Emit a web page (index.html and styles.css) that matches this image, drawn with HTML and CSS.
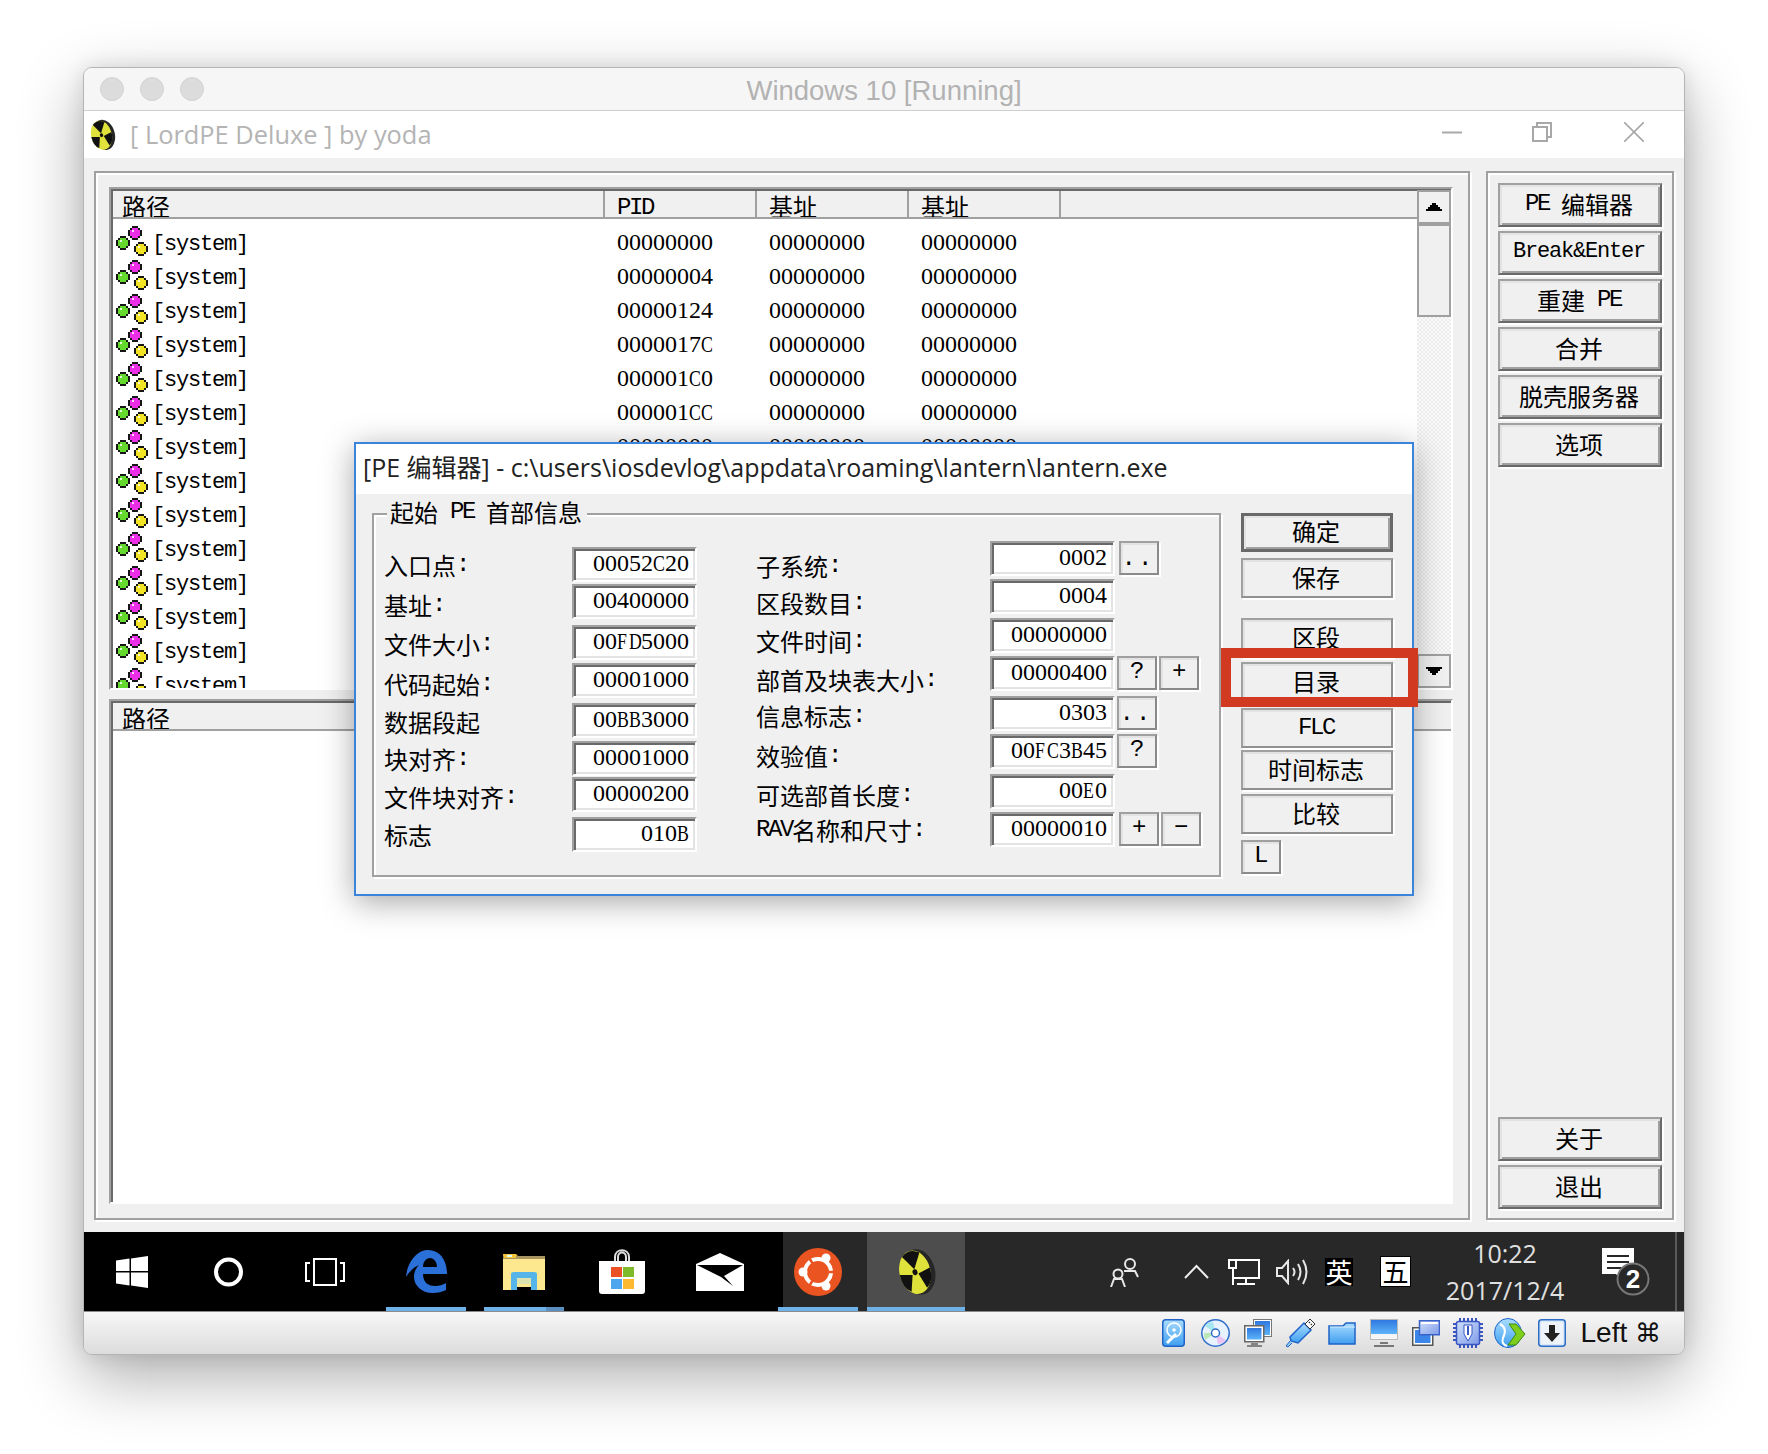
FILE: index.html
```html
<!DOCTYPE html>
<html lang="zh">
<head>
<meta charset="utf-8">
<title>Windows 10 [Running]</title>
<link rel="stylesheet" href="styles.css">
</head>
<body>
<svg class="defs" xmlns="http://www.w3.org/2000/svg">
  <defs>
    <linearGradient id="blue" x1="0" y1="0" x2="0" y2="1"><stop offset="0" stop-color="#2f78e0"/><stop offset="1" stop-color="#5db4f8"/></linearGradient>
    <linearGradient id="sky" x1="0" y1="0" x2="0" y2="1"><stop offset="0" stop-color="#a9dcff"/><stop offset="1" stop-color="#3f9ff0"/></linearGradient>
    <linearGradient id="pale" x1="0" y1="0" x2="1" y2="1"><stop offset="0" stop-color="#cfe0fb"/><stop offset="1" stop-color="#7f9be8"/></linearGradient>
    <symbol id="ball" viewBox="0 0 7 7">
      <path fill="#161616" d="M2 0H5V1H6V2H7V5H6V6H5V7H2V6H1V5H0V2H1V1H2Z"/>
      <path d="M2 1H5V2H6V5H5V6H2V5H1V2H2Z"/>
      <rect x="2" y="2" width="1" height="1" fill="#fff" opacity=".8"/>
    </symbol>
    <symbol id="procs" viewBox="0 0 32 30">
      <g shape-rendering="crispEdges">
        <use href="#ball" x="0" y="10" width="14" height="14" fill="#66d92e"/>
        <use href="#ball" x="12" y="0" width="14" height="14" fill="#ea2fe6"/>
        <use href="#ball" x="18" y="16" width="14" height="14" fill="#f2e424"/>
      </g>
    </symbol>
    <symbol id="hazard" viewBox="0 0 41 48">
      <g transform="rotate(-14 20 24)">
        <ellipse cx="22.500" cy="24.500" rx="16.500" ry="23" fill="#262626"/>
        <ellipse cx="19" cy="24" rx="15.500" ry="22" fill="#dfe23a"/>
        <path fill="#111" d="M19 21L10 6Q19 -1 28 6Z"/>
        <path fill="#111" d="M16 26L3.500 23Q3 37 11 42Z"/>
        <path fill="#111" d="M22 26L34.500 23Q35 37 27 42Z"/>
        <ellipse cx="19" cy="24" rx="2.500" ry="3" fill="#111"/>
      </g>
    </symbol>
  </defs>
</svg>

<div class="window">
  <header class="mac-bar">
    <span class="light"></span><span class="light"></span><span class="light"></span>
    <span class="mac-title">Windows 10 [Running]</span>
  </header>

  <div class="app-bar">
    <svg class="app-icon" width="29" height="32"><use href="#hazard"/></svg>
    <span class="app-title">[ LordPE Deluxe ] by yoda</span>
    <svg class="cap-min" width="20" height="20" viewBox="0 0 20 20"><path d="M0 10.500H20" stroke="#a8a8a8" stroke-width="2"/></svg>
    <svg class="cap-max" width="20" height="20" viewBox="0 0 20 20"><path d="M5 5V1H19V15H15M1 5H15V19H1Z" fill="none" stroke="#a8a8a8" stroke-width="2"/></svg>
    <svg class="cap-close" width="20" height="20" viewBox="0 0 20 20"><path d="M0 0L20 20M20 0L0 20" stroke="#a8a8a8" stroke-width="1.6"/></svg>
  </div>

  <main class="desk">
    <section class="frame frame-left">
      <div class="sunken list-top">
        <div class="sunken-in">
          <div class="list-main">
            <div class="head">
              <div class="hc hc-path"><span class="cj">路径</span></div>
              <div class="hc"><span class="ln hl">PID</span></div>
              <div class="hc"><span class="cj">基址</span></div>
              <div class="hc"><span class="cj">基址</span></div>
            </div>
            <div class="rows">
              <div class="row"><div class="cell-path"><svg width="32" height="30"><use href="#procs"/></svg><span class="lw">[system]</span></div><div class="cell d">00000000</div><div class="cell d">00000000</div><div class="cell d">00000000</div></div>
              <div class="row"><div class="cell-path"><svg width="32" height="30"><use href="#procs"/></svg><span class="lw">[system]</span></div><div class="cell d">00000004</div><div class="cell d">00000000</div><div class="cell d">00000000</div></div>
              <div class="row"><div class="cell-path"><svg width="32" height="30"><use href="#procs"/></svg><span class="lw">[system]</span></div><div class="cell d">00000124</div><div class="cell d">00000000</div><div class="cell d">00000000</div></div>
              <div class="row"><div class="cell-path"><svg width="32" height="30"><use href="#procs"/></svg><span class="lw">[system]</span></div><div class="cell d">0000017<i class="cap">C</i></div><div class="cell d">00000000</div><div class="cell d">00000000</div></div>
              <div class="row"><div class="cell-path"><svg width="32" height="30"><use href="#procs"/></svg><span class="lw">[system]</span></div><div class="cell d">000001<i class="cap">C</i>0</div><div class="cell d">00000000</div><div class="cell d">00000000</div></div>
              <div class="row"><div class="cell-path"><svg width="32" height="30"><use href="#procs"/></svg><span class="lw">[system]</span></div><div class="cell d">000001<i class="cap">C</i><i class="cap">C</i></div><div class="cell d">00000000</div><div class="cell d">00000000</div></div>
              <div class="row"><div class="cell-path"><svg width="32" height="30"><use href="#procs"/></svg><span class="lw">[system]</span></div><div class="cell d">00000000</div><div class="cell d">00000000</div><div class="cell d">00000000</div></div>
              <div class="row"><div class="cell-path"><svg width="32" height="30"><use href="#procs"/></svg><span class="lw">[system]</span></div></div>
              <div class="row"><div class="cell-path"><svg width="32" height="30"><use href="#procs"/></svg><span class="lw">[system]</span></div></div>
              <div class="row"><div class="cell-path"><svg width="32" height="30"><use href="#procs"/></svg><span class="lw">[system]</span></div></div>
              <div class="row"><div class="cell-path"><svg width="32" height="30"><use href="#procs"/></svg><span class="lw">[system]</span></div></div>
              <div class="row"><div class="cell-path"><svg width="32" height="30"><use href="#procs"/></svg><span class="lw">[system]</span></div></div>
              <div class="row"><div class="cell-path"><svg width="32" height="30"><use href="#procs"/></svg><span class="lw">[system]</span></div></div>
              <div class="row"><div class="cell-path"><svg width="32" height="30"><use href="#procs"/></svg><span class="lw">[system]</span></div></div>
            </div>
          </div>
          <div class="scroll">
            <div class="sb-btn sb-up"><svg width="16" height="8" viewBox="0 0 16 8" shape-rendering="crispEdges"><path d="M6 0H10V2H12V4H14V6H16V8H0V6H2V4H4V2H6Z" fill="#000"/></svg></div>
            <div class="sb-thumb"></div>
            <div class="sb-track"></div>
            <div class="sb-btn sb-down"><svg width="16" height="8" viewBox="0 0 16 8" shape-rendering="crispEdges"><path d="M0 0H16V2H14V4H12V6H10V8H6V6H4V4H2V2H0Z" fill="#000"/></svg></div>
          </div>
        </div>
      </div>
      <div class="sunken list-bottom">
        <div class="sunken-in sunken-col">
          <div class="head">
            <div class="hc hc-path"><span class="cj">路径</span></div>
          </div>
          <div class="blank"></div>
        </div>
      </div>
    </section>

    <aside class="frame frame-right">
      <div class="btn side"><span class="ln">PE </span><span class="cj">编辑器</span></div>
      <div class="btn side"><span class="lw">Break&amp;Enter</span></div>
      <div class="btn side"><span class="cj">重建</span><span class="ln"> PE</span></div>
      <div class="btn side"><span class="cj">合并</span></div>
      <div class="btn side"><span class="cj">脱壳服务器</span></div>
      <div class="btn side"><span class="cj">选项</span></div>
      <div class="side-gap"></div>
      <div class="btn side"><span class="cj">关于</span></div>
      <div class="btn side"><span class="cj">退出</span></div>
    </aside>
  </main>

  <footer class="taskbar">
    <div class="tb tb-sys">
      <svg width="32" height="32" viewBox="0 0 32 32"><path fill="#fff" d="M0 4.500L13.500 2.600V15H0ZM15 2.400L32 0V15H15ZM0 16.500H13.500V29.400L0 27.500ZM15 16.500H32V32L15 29.600Z"/></svg>
    </div>
    <div class="tb tb-sys">
      <svg width="31" height="30" viewBox="0 0 31 30"><circle cx="15.500" cy="15" r="12.500" fill="none" stroke="#fff" stroke-width="4"/></svg>
    </div>
    <div class="tb tb-sys">
      <svg width="40" height="28" viewBox="0 0 40 28"><path fill="none" stroke="#fff" stroke-width="2" d="M9 1H31V27H9ZM5 5H1V23H5M35 5H39V23H35"/></svg>
    </div>
    <div class="tb tb-app tb-edge on">
      <svg width="41" height="43" viewBox="0 0 41 43"><path fill="#2a70d8" fill-rule="evenodd" d="M22 0C33 0 41 9 41 24H17C17 33 23 36 29 36C33 36 37 35 40 33V40C36 42 32 43 27 43C15 43 8 35 8 27C8 22 10 18 13 15C8 17 3 22 0 27C1 14 10 0 22 0ZM17 17H31C31 12 28 8 24 8C20 8 17 12 17 17Z"/></svg>
    </div>
    <div class="tb tb-app on on-multi">
      <svg width="42" height="36" viewBox="0 0 42 36"><path fill="#e9b93f" d="M0 0H13L16 3H0Z"/><rect y="2" width="42" height="34" fill="#fde88f"/><rect y="2" width="42" height="3" fill="#a89560"/><rect x="1" y="0" width="12" height="4" fill="#f3c33c"/><rect x="4" y="1" width="5" height="2" fill="#dff"/><path fill="#000" d="M8 33H34V36H8Z"/><path fill="#55b5e8" d="M8 20Q8 18 11 18H31Q34 18 34 20V36H28V24H14V36H8Z"/><rect x="14" y="24" width="14" height="6" fill="#dde4b0"/></svg>
    </div>
    <div class="tb tb-app">
      <svg width="46" height="45" viewBox="0 0 46 45"><path fill="none" stroke="#ddd" stroke-width="2" d="M16 13V8C16 -1 30 -1 30 8V13M19 13V8C19 2 27 2 27 8V13"/><path fill="#fff" d="M0 12H46V42Q46 45 43 45H3Q0 45 0 42Z"/><rect x="12" y="18" width="11" height="10" fill="#ea5125"/><rect x="24" y="18" width="11" height="10" fill="#7fba2a"/><rect x="12" y="30" width="11" height="10" fill="#4ea6ee"/><rect x="24" y="30" width="11" height="10" fill="#ffb931"/></svg>
    </div>
    <div class="tb tb-app">
      <svg width="48" height="38" viewBox="0 0 48 38"><path fill="#fff" d="M24 0L48 11V38H0V11Z"/><path fill="#000" d="M1 12H47L28 23L37 33L25 24Z"/></svg>
    </div>
    <div class="tb tb-app tb-ubuntu on">
      <svg width="48" height="48" viewBox="0 0 48 48"><circle cx="24" cy="24" r="24" fill="#e95420"/><circle cx="24" cy="24" r="13" fill="none" stroke="#fff" stroke-width="4"/><path stroke="#e95420" stroke-width="2.500" d="M24 24L42 24M24 24L12 5M24 24L12 43"/><circle cx="9" cy="24" r="4.500" fill="#fff"/><circle cx="32" cy="10" r="4.500" fill="#fff"/><circle cx="32" cy="38" r="4.500" fill="#fff"/></svg>
    </div>
    <div class="tb tb-app tb-active on">
      <svg width="41" height="48"><use href="#hazard"/></svg>
    </div>

    <div class="tray">
      <svg class="t-people" width="30" height="30" viewBox="0 0 30 30"><g fill="none" stroke="#e8e8e8" stroke-width="2"><circle cx="21" cy="7" r="5"/><circle cx="9" cy="17" r="4.500"/><path d="M2 30L5 22H13L16 30M15 14H26L29 20"/></g></svg>
      <svg class="t-chev" width="25" height="15" viewBox="0 0 25 15"><path d="M1 14L12.500 2L24 14" fill="none" stroke="#eee" stroke-width="2"/></svg>
      <svg class="t-net" width="32" height="26" viewBox="0 0 32 26"><g fill="none" stroke="#fff" stroke-width="2"><path d="M8 1H31V19H6"/><path d="M5 8V26M18 19V25M9 25H27"/><rect x="1" y="1" width="7" height="8"/></g></svg>
      <svg class="t-vol" width="33" height="26" viewBox="0 0 33 26"><g fill="none" stroke="#e8e8e8" stroke-width="2"><path d="M1 9H6L12 2V24L6 17H1Z"/><path d="M17 9Q20 13 17 17M22 5Q27 13 22 21M27 1Q34 13 27 25"/></g></svg>
      <span class="t-ying">英</span>
      <span class="t-wu">五</span>
      <div class="t-clock"><span>10:22</span><span>2017/12/4</span></div>
      <div class="t-note">
        <svg width="48" height="48" viewBox="0 0 48 48"><path fill="#fff" d="M0 0H32V26H22L18 31L14 26H0Z"/><path stroke="#282828" stroke-width="2" d="M5 8H27M5 14H27M5 20H20"/><circle cx="31" cy="31" r="15.500" fill="#282828" stroke="#777" stroke-width="2"/></svg>
        <span class="t-badge">2</span>
      </div>
    </div>
  </footer>

  <div class="status">
    <span class="si"><svg width="23" height="28" viewBox="0 0 23 28"><rect x=".75" y=".75" width="21.500" height="26.500" rx="3" fill="url(#sky)" stroke="#1f63c8" stroke-width="1.500"/><circle cx="12" cy="11" r="7" fill="none" stroke="#fff" stroke-width="1.500"/><circle cx="12" cy="11" r="1.800" fill="#fff"/><path d="M5 24L14 15" stroke="#fff" stroke-width="3"/></svg></span>
    <span class="si"><svg width="29" height="28" viewBox="0 0 29 28"><ellipse cx="14.500" cy="14" rx="13.700" ry="13.200" fill="#e8f2ff" stroke="#2f6fcb" stroke-width="1.500"/><path fill="#a5e6f0" d="M14.500 14L4 7Q7 3 12 3Z"/><path fill="#e9c4f2" d="M14.500 14L25 21Q22 25 17 25Z"/><path fill="#b9e8b5" d="M14.500 14L4 21Q3 18 3 14Z"/><ellipse cx="14.500" cy="14" rx="4" ry="4" fill="#fff" stroke="#2f6fcb" stroke-width="1.500"/></svg></span>
    <span class="si"><svg width="28" height="28" viewBox="0 0 28 28"><rect x="9.500" y=".5" width="18" height="17" fill="#fff" stroke="#777"/><rect x="11" y="2" width="15" height="14" fill="url(#blue)"/><rect x=".75" y="6.750" width="19" height="16" fill="#fff" stroke="#666" stroke-width="1.500"/><rect x="3" y="9" width="14.500" height="11.500" fill="url(#blue)"/><path d="M7 25H14M3 27H18" stroke="#666" stroke-width="1.500"/></svg></span>
    <span class="si"><svg width="32" height="30" viewBox="0 0 32 30"><path fill="url(#sky)" stroke="#1f63c8" stroke-width="1.500" d="M20 5L27 12L14 25L7 23L6 19Z"/><path d="M6 23L2 28L4 29L8 25" fill="#8fc8f5" stroke="#1f63c8"/><path fill="#fff" stroke="#333" d="M21 6L26 1L31 6L26 11Z"/><path d="M25 4L26 5M27 6L28 7" stroke="#333" stroke-width="1.400"/></svg></span>
    <span class="si"><svg width="29" height="23" viewBox="0 0 29 23"><path fill="url(#sky)" stroke="#1f63c8" stroke-width="1.500" d="M1 4H15L18 1H27V22H1Z"/><path d="M2 5H27" stroke="#d4efff"/></svg></span>
    <span class="si"><svg width="28" height="28" viewBox="0 0 28 28"><rect width="28" height="21" fill="#b9b9b9"/><rect x="1" y="1" width="26" height="14" fill="url(#blue)"/><rect x="1" y="15" width="26" height="5" fill="#f5f5f5"/><path d="M10 24H18M4 27H24" stroke="#777" stroke-width="2"/></svg></span>
    <span class="si"><svg width="28" height="26" viewBox="0 0 28 26"><rect x=".75" y="7.750" width="20" height="17.500" fill="#fff" stroke="#555" stroke-width="1.500"/><rect x="3" y="10" width="15.500" height="13" fill="#3b86e8"/><rect x="7.500" y=".75" width="20" height="14" fill="url(#pale)" stroke="#3a62c8" stroke-width="1.500"/><path d="M9 3H26" stroke="#fff" stroke-width="2"/></svg></span>
    <span class="si"><svg width="30" height="30" viewBox="0 0 30 30"><path stroke="#3a56c0" stroke-width="2" d="M0 6H4M0 10H4M0 14H4M0 18H4M0 22H4M26 6H30M26 10H30M26 14H30M26 18H30M26 22H30M7 0V4M11 0V4M15 0V4M19 0V4M23 0V4M7 26V30M11 26V30M15 26V30M19 26V30M23 26V30"/><rect x="3.500" y="3.500" width="23" height="23" rx="2" fill="url(#pale)" stroke="#3a56c0" stroke-width="1.500"/><path fill="#fff" stroke="#3a56c0" d="M11 7H19V16L15 23L11 16Z"/><path fill="#3a56c0" d="M14 8H16V17H14Z"/></svg></span>
    <span class="si"><svg width="32" height="30" viewBox="0 0 32 30"><ellipse cx="14" cy="15" rx="13.500" ry="14.500" fill="url(#sky)" stroke="#1f63c8"/><path d="M6 6Q14 10 9 20Q7 26 13 28" fill="none" stroke="#fff" stroke-width="2"/><path fill="#7fce1c" stroke="#3d8a10" d="M15 6H22L31 16L22 27H14L22 16Z"/></svg></span>
    <span class="si"><svg width="28" height="28" viewBox="0 0 28 28"><rect x=".75" y=".75" width="26.500" height="26.500" rx="3" fill="#d8e8f8" stroke="#2a6cc8" stroke-width="1.500"/><rect x="3" y="3" width="22" height="22" rx="2" fill="#eef3fa"/><path fill="#222" d="M11 6H17V14H22L14 23L6 14H11Z"/></svg></span>
    <span class="status-text">Left <span class="cmd">⌘</span></span>
  </div>

  <div class="dialog">
    <div class="dlg-title">[PE 编辑器] - c:\users\iosdevlog\appdata\roaming\lantern\lantern.exe</div>
    <div class="dlg-body">
      <div class="group">
        <div class="legend"><span class="cj">起始</span><span class="ln"> PE </span><span class="cj">首部信息</span></div>
        <div class="col col-l1">
          <div class="lb"><span class="cj">入口点</span><span class="ln">:</span></div>
          <div class="lb"><span class="cj">基址</span><span class="ln">:</span></div>
          <div class="lb"><span class="cj">文件大小</span><span class="ln">:</span></div>
          <div class="lb"><span class="cj">代码起始</span><span class="ln">:</span></div>
          <div class="lb"><span class="cj">数据段起</span></div>
          <div class="lb"><span class="cj">块对齐</span><span class="ln">:</span></div>
          <div class="lb"><span class="cj">文件块对齐</span><span class="ln">:</span></div>
          <div class="lb"><span class="cj">标志</span></div>
        </div>
        <div class="col col-i1">
          <div class="inp d">00052<i class="cap">C</i>20</div>
          <div class="inp d">00400000</div>
          <div class="inp d">00<i class="cap">F</i><i class="cap">D</i>5000</div>
          <div class="inp d">00001000</div>
          <div class="inp d">00<i class="cap">B</i><i class="cap">B</i>3000</div>
          <div class="inp d">00001000</div>
          <div class="inp d">00000200</div>
          <div class="inp d">010<i class="cap">B</i></div>
        </div>
        <div class="col col-l2">
          <div class="lb"><span class="cj">子系统</span><span class="ln">:</span></div>
          <div class="lb"><span class="cj">区段数目</span><span class="ln">:</span></div>
          <div class="lb"><span class="cj">文件时间</span><span class="ln">:</span></div>
          <div class="lb"><span class="cj">部首及块表大小</span><span class="ln">:</span></div>
          <div class="lb"><span class="cj">信息标志</span><span class="ln">:</span></div>
          <div class="lb"><span class="cj">效验值</span><span class="ln">:</span></div>
          <div class="lb"><span class="cj">可选部首长度</span><span class="ln">:</span></div>
          <div class="lb"><span class="ln">RAV</span><span class="cj">名称和尺寸</span><span class="ln">:</span></div>
        </div>
        <div class="col col-i2">
          <div class="irow"><div class="inp d">0002</div><div class="btn mini gap4"><span class="ln dots">..</span></div></div>
          <div class="irow"><div class="inp d">0004</div></div>
          <div class="irow"><div class="inp d">00000000</div></div>
          <div class="irow"><div class="inp d">00000400</div><div class="btn mini gap2"><span class="ln">?</span></div><div class="btn mini gap2"><span class="ln">+</span></div></div>
          <div class="irow"><div class="inp d">0303</div><div class="btn mini gap2"><span class="ln dots">..</span></div></div>
          <div class="irow"><div class="inp d">00<i class="cap">F</i><i class="cap">C</i>3<i class="cap">B</i>45</div><div class="btn mini gap2"><span class="ln">?</span></div></div>
          <div class="irow"><div class="inp d">00<i class="cap">E</i>0</div></div>
          <div class="irow"><div class="inp d">00000010</div><div class="btn mini gap4"><span class="ln">+</span></div><div class="btn mini gap2"><span class="ln">−</span></div></div>
        </div>
      </div>
      <div class="dlg-btns">
        <div class="btn dbtn def"><span class="cj">确定</span></div>
        <div class="btn dbtn b-save"><span class="cj">保存</span></div>
        <div class="btn dbtn b-sect"><span class="cj">区段</span></div>
        <div class="btn dbtn b-dir"><span class="cj">目录</span></div>
        <div class="btn dbtn b-flc"><span class="ln hl">FLC</span></div>
        <div class="btn dbtn b-time"><span class="cj">时间标志</span></div>
        <div class="btn dbtn b-cmp"><span class="cj">比较</span></div>
        <div class="btn mini b-l"><span class="ln">L</span></div>
      </div>
    </div>
  </div>
  <div class="redbox"></div>
</div>
</body>
</html>
```
FILE: styles.css
```css
* { box-sizing: border-box; }
html, body { margin: 0; padding: 0; background: #fff; }
body { padding: 67px 0 0 83px; height: 1454px; overflow: hidden; font-family: "Liberation Sans", "Noto Sans CJK SC", sans-serif; color: #000; }
.defs { position: absolute; width: 0; height: 0; }
svg { display: block; flex: none; }

.window { position: relative; width: 1602px; height: 1288px; display: flex; flex-direction: column; border: 1px solid #b4b4b4; border-radius: 9px; background: #f0f0f0; box-shadow: 0 22px 65px rgba(0,0,0,.33), 0 0 20px rgba(0,0,0,.1); }

.mac-bar { position: relative; height: 43px; flex: none; display: flex; align-items: center; gap: 16px; padding-left: 16px; background: #f6f6f6; border-bottom: 1px solid #cfcfcf; border-radius: 8px 8px 0 0; }
.light { width: 24px; height: 24px; border-radius: 50%; background: #dcdcdc; border: 1px solid #d2d2d2; }
.mac-title { position: absolute; left: 0; right: 0; top: 7px; text-align: center; font-size: 27.5px; line-height: 32px; color: #b2b2b2; }

.app-bar { height: 47px; flex: none; display: flex; align-items: center; background: #fff; padding-left: 4px; }
.app-title { margin: 0 0 2px 13px; font-family: "Open Sans", "Noto Sans CJK SC", sans-serif; font-size: 25.4px; color: #b4b4b4; white-space: nowrap; }
.cap-min { margin: 0 0 5px auto; }
.cap-max { margin: 0 0 5px 70px; }
.cap-close { margin: 0 40px 5px 72px; }

.desk { height: 1074px; flex: none; display: flex; gap: 16px; padding: 13px 9px 12px 10px; background: #f0f0f0; }
.frame { border: 2px solid #a0a0a0; box-shadow: inset 2px 2px 0 #fff, 2px 2px 0 #fff; }
.frame-left { width: 1376px; display: flex; flex-direction: column; gap: 9px; padding: 14px 15px 14px 13px; }
.frame-right { width: 188px; display: flex; flex-direction: column; gap: 4px; padding: 10px 10px 9px 10px; }
.side-gap { flex: 1; }

.sunken { border: 2px solid #a0a0a0; border-right-color: #fff; border-bottom-color: #fff; background: #fff; }
.sunken-in { height: 100%; display: flex; border-top: 2px solid #696969; border-left: 2px solid #696969; }
.sunken-col { flex-direction: column; }
.list-top { height: 503px; }
.list-bottom { height: 505px; }
.list-main { flex: 1; min-width: 0; display: flex; flex-direction: column; overflow: hidden; }
.head { height: 28px; flex: none; display: flex; background: #f0f0f0; border-bottom: 2px solid #a0a0a0; overflow: hidden; }
.hc { width: 152px; flex: none; height: 26px; padding-left: 12px; border-right: 2px solid #a0a0a0; display: flex; align-items: flex-start; white-space: nowrap; }
.hc-path { width: 492px; padding-left: 9px; }
.blank { flex: 1; background: #fff; }
.rows { flex: 1; padding-top: 6px; overflow: hidden; }
.row { height: 34px; display: flex; align-items: center; }
.cell-path { width: 490px; flex: none; display: flex; align-items: center; gap: 4px; padding-left: 3px; }
.cell-path svg { margin-bottom: 2px; }
.cell-path .lw { padding-top: 5px; }
.cell { width: 152px; flex: none; padding-left: 14px; }

.cj { font-family: "Noto Sans CJK SC", sans-serif; font-size: 24px; line-height: 30px; white-space: pre; }
.ln { font-family: "Liberation Mono", monospace; font-size: 24px; letter-spacing: -2.4px; line-height: 30px; white-space: pre; }
.lw { font-family: "Liberation Mono", monospace; font-size: 22px; letter-spacing: -1.2px; line-height: 30px; white-space: pre; }
.d { font-family: "Liberation Serif", serif; font-size: 24px; line-height: 30px; white-space: nowrap; }
.cap { font-style: normal; display: inline-block; width: 12px; transform: scaleX(.74); transform-origin: 0 50%; }
.dots { letter-spacing: 2px; padding-top: 4px; }
.hl { padding-top: 2px; }

.scroll { width: 34px; flex: none; display: flex; flex-direction: column; margin-top: -1px; }
.sb-btn { flex: none; height: 34px; display: flex; align-items: center; justify-content: center; background: #f0f0f0; border: 2px solid #a0a0a0; }
.sb-up { border-bottom-width: 4px; height: 36px; }
.sb-thumb { height: 91px; flex: none; background: #f0f0f0; border: 2px solid #a0a0a0; border-top: 0; }
.sb-track { flex: 1; background: conic-gradient(#ececec 25%, #fafafa 0 50%, #ececec 0 75%, #fafafa 0) 0 0 / 4px 4px; }

.btn { display: flex; align-items: center; justify-content: center; padding: 0 2px 3px 0; background: #f0f0f0; border: 2px solid; border-color: #a0a0a0 #696969 #696969 #a0a0a0; box-shadow: inset 2px 2px 0 #e3e3e3, inset -2px -2px 0 #a0a0a0, 2px 2px 0 #fff; white-space: nowrap; }
.side { width: 164px; height: 44px; flex: none; }

.taskbar { height: 80px; flex: none; display: flex; background: #000; border-bottom: 1px solid #8a8a8a; }
.tb { position: relative; flex: none; height: 79px; display: flex; align-items: center; justify-content: center; }
.tb-sys { width: 96.5px; }
.tb-app { width: 98px; }
.tb-edge { margin-left: 3.5px; }
.tb-ubuntu { background: linear-gradient(90deg, transparent 14px, #282828 14px); }
.tb-active { background: #4d4d4d; }
.on::after { content: ""; position: absolute; left: 9px; right: 9px; bottom: 0; height: 4px; background: #6db3ea; }
.on-multi::after { background: linear-gradient(90deg, #6db3ea 62px, #5b8fc0 62px); }
.tb-active::after { left: 0; right: 0; }
.tray { flex: 1; height: 79px; display: flex; align-items: center; background: #282828; border-right: 7px solid #282828; box-shadow: inset -2px 0 0 #5a5a5a; position: relative; }
.t-people { margin-left: 144px; }
.t-chev { margin-left: 45px; }
.t-net { margin-left: 19px; }
.t-vol { margin-left: 16px; }
.t-ying { margin-left: 16px; width: 28px; height: 28px; background: #000; color: #fff; font: 27px/28px "Noto Sans CJK SC", sans-serif; text-align: center; }
.t-wu { margin-left: 27px; width: 31px; height: 31px; background: #fff; color: #000; border: 1px solid #000; font: 26px/28px "Noto Sans CJK SC", sans-serif; text-align: center; }
.t-clock { margin-left: 35px; width: 118px; display: flex; flex-direction: column; align-items: center; gap: 11px; font-family: "Open Sans", sans-serif; font-size: 25px; line-height: 26px; color: #e0e0e0; white-space: nowrap; }
.t-note { position: relative; margin-left: 38px; }
.t-badge { position: absolute; left: 23px; top: 18px; width: 16px; text-align: center; font: bold 26px/26px "Liberation Sans", sans-serif; color: #fff; }

.status { flex: 1; display: flex; align-items: center; justify-content: flex-end; padding-right: 23px; background: linear-gradient(#f7f7f7, #dcdcdc); border-radius: 0 0 8px 8px; }
.si { width: 42.1px; display: flex; justify-content: center; flex: none; }
.status-text { margin-left: 7px; font-size: 28px; line-height: 32px; white-space: nowrap; color: #111; }
.cmd { font-family: "DejaVu Sans", sans-serif; font-size: 26px; }

.dialog { position: absolute; left: 270px; top: 374px; width: 1060px; height: 454px; display: flex; flex-direction: column; background: #f0f0f0; border: 2px solid #3a84dc; box-shadow: 0 6px 30px rgba(0,0,0,.35); }
.dlg-title { height: 50px; flex: none; background: #fff; padding: 0 0 0 7px; font-family: "Open Sans", "Noto Sans CJK SC", sans-serif; font-size: 25px; line-height: 46px; color: #222; white-space: nowrap; }
.dlg-body { flex: 1; display: flex; padding: 19px 0 0 16px; }
.group { position: relative; width: 849px; height: 364px; flex: none; display: flex; align-items: flex-start; border: 2px solid #a0a0a0; box-shadow: inset 2px 2px 0 #fff, 2px 2px 0 #fff; padding-left: 10px; }
.legend { position: absolute; left: 13px; top: -18px; padding: 0 5px 0 3px; height: 30px; white-space: pre; display: flex; background: linear-gradient(transparent 15px, #f0f0f0 15px, #f0f0f0 20px, transparent 20px); }
.col { display: grid; flex: none; }
.col-l1 { width: 188px; margin-top: 35px; grid-template-rows: 40px 39px 40px 38px 37px 38px 38px 30px; }
.col-i1 { width: 125px; margin-top: 32px; grid-template-rows: 37px 41px 38px 40px 38px 36px 40px 35px; }
.col-l2 { width: 234px; margin-top: 36px; margin-left: 59px; grid-template-rows: 37px 38px 39px 36px 40px 39px 35px 30px; }
.col-i2 { margin-top: 26px; grid-template-rows: 38px 39px 38px 40px 38px 40px 38px 34px; }
.lb { height: 30px; white-space: pre; display: flex; }
.inp { width: 125px; height: 35px; flex: none; text-align: right; padding-right: 6px; line-height: 29px; background: #fff; border: 2px solid; border-color: #a0a0a0 #fff #fff #a0a0a0; box-shadow: inset 2px 2px 0 #696969, inset -2px -2px 0 #e3e3e3; }
.irow { display: flex; align-items: flex-start; }
.btn.mini { width: 40px; height: 34px; flex: none; border-color: #a0a0a0 #8a8a8a #8a8a8a #a0a0a0; box-shadow: inset 2px 2px 0 #e3e3e3, 2px 2px 0 #fff; }
.gap2 { margin-left: 2px; }
.gap4 { margin-left: 4px; }

.dlg-btns { margin-left: 20px; display: flex; flex-direction: column; align-items: flex-start; }
.dbtn { width: 152px; height: 40px; flex: none; border-color: #a0a0a0 #909090 #909090 #a0a0a0; box-shadow: inset 2px 2px 0 #e3e3e3, 2px 2px 0 #fff; }
.def { height: 39px; border-color: #696969; border-width: 3px; box-shadow: inset 2px 2px 0 #e3e3e3, inset -2px -2px 0 #a0a0a0; }
.b-save { margin-top: 6px; }
.b-sect { margin-top: 20px; }
.b-dir { margin-top: 4px; }
.b-flc { margin-top: 6px; }
.b-time { margin-top: 2px; }
.b-cmp { margin-top: 4px; }
.btn.b-l { margin-top: 6px; }

.redbox { position: absolute; left: 1137px; top: 580px; width: 197px; height: 59px; border: 10px solid #d13a20; pointer-events: none; }
```
